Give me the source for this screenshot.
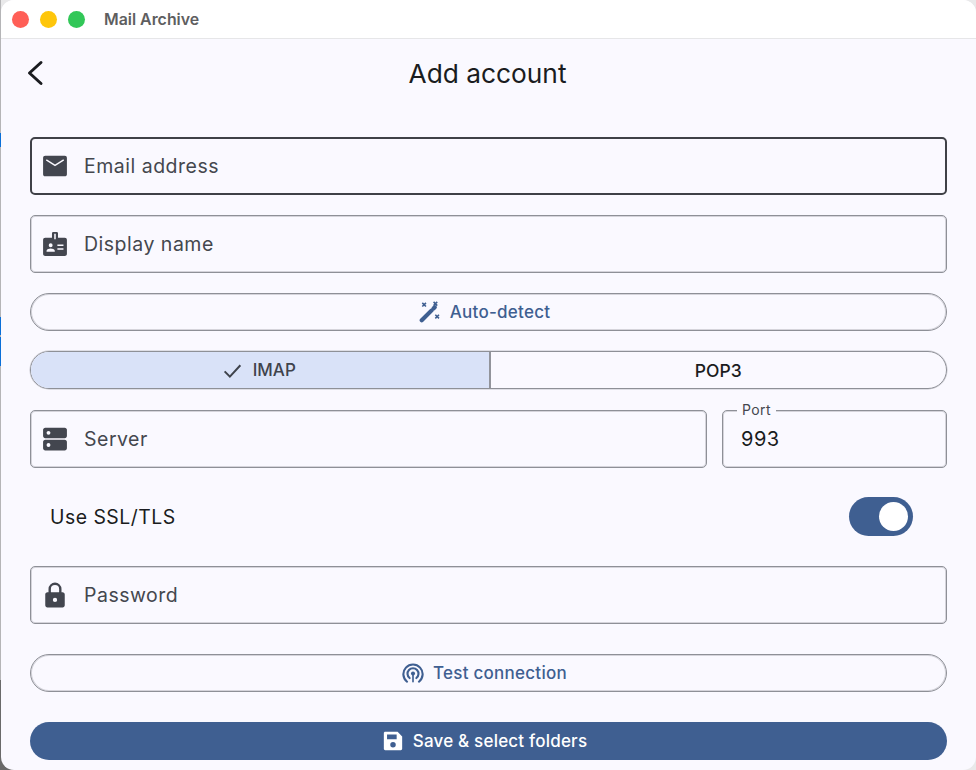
<div class="desktop">
	<!-- slivers of whatever sits behind the window -->
	<span class="sliver strip"></span>
	<span class="sliver blue one"></span>
	<span class="sliver blue two"></span>
	<span class="sliver blue three"></span>
	<span class="sliver dark"></span>

	<div class="window">
		<header class="titlebar">
			<div class="lights">
				<span class="light red"></span>
				<span class="light yellow"></span>
				<span class="light green"></span>
			</div>
			<span class="app-name">Mail Archive</span>
		</header>

		<main class="page">
			<div class="appbar">
				<button type="button" class="back" aria-label="Back">
					<svg width="28" height="28" viewBox="0 0 28 28" fill="none" stroke="#1a1c20" stroke-width="3" stroke-linecap="round" stroke-linejoin="round">
						<path d="M17 3.500 L5.500 14 L17 24.500" />
					</svg>
				</button>
				<h1>Add account</h1>
			</div>

			<div class="form">
				<div class="field focused">
					<svg class="icon" viewBox="0 0 24 24"><path d="M3 2.500h18c1.200 0 2 .8 2 2v15c0 1.200-.8 2-2 2H3c-1.200 0-2-.8-2-2v-15c0-1.200.8-2 2-2zm1.300 3.300-.7 1.200L12 12.200 20.400 7l-.7-1.200L12 10.500 4.300 5.800z" fill-rule="evenodd" /></svg>
					<span class="label">Email address</span>
				</div>

				<div class="field">
					<svg class="icon" viewBox="0 0 24 24"><path d="M10.500 1h3c.8 0 1.300.6 1.300 1.300v3.900H21c1.200 0 2 .8 2 2V21c0 1.200-.8 2-2 2H3c-1.200 0-2-.8-2-2V8.200c0-1.200.8-2 2-2h6.200V2.300c0-.7.5-1.300 1.300-1.300zm.8 1.500v5h1.400v-5h-1.400zM8 11.300a1.800 1.800 0 1 0 0 3.600 1.800 1.800 0 0 0 0-3.600zm-3.800 6.900v1h7.600v-1c0-1.300-2.500-2-3.800-2s-3.800.7-3.800 2zm10-5.700v1.400h5.600v-1.400h-5.600zm0 3.400v1.400h5.600v-1.400h-5.600z" fill-rule="evenodd" /></svg>
					<span class="label">Display name</span>
				</div>

				<button type="button" class="pill">
					<svg class="btn-icon stroked" viewBox="0 0 24 24">
						<path d="M3 21 L13.500 10.500" stroke-width="4.600" stroke-linecap="round" />
						<path d="M15.800 8.200 L17.200 6.800" stroke-width="4.600" stroke-linecap="round" />
						<path d="M3.600 2 L7.600 6 M7.600 2 L3.600 6 M15.900 1 L19.900 5 M19.900 1 L15.900 5 M17.800 15 L21.800 19 M21.800 15 L17.800 19" stroke-width="1.700" />
					</svg>
					Auto-detect
				</button>

				<div class="segments">
					<button type="button" class="segment selected">
						<svg width="21" height="21" viewBox="0 0 24 24" fill="none" stroke="#3f434c" stroke-width="2.300"><path d="M3 13l6 6L21 6" /></svg>
						IMAP
					</button>
					<button type="button" class="segment">POP3</button>
				</div>

				<div class="server-row">
					<div class="field grow">
						<svg class="icon" viewBox="0 0 24 24"><path d="M3 1.500h18c1.100 0 2 .9 2 2v5.700c0 1.100-.9 2-2 2H3c-1.100 0-2-.9-2-2V3.500c0-1.100.9-2 2-2zm3 3a1.800 1.800 0 1 0 0 3.600 1.800 1.800 0 0 0 0-3.600zM3 12.800h18c1.100 0 2 .9 2 2v5.700c0 1.100-.9 2-2 2H3c-1.100 0-2-.9-2-2v-5.700c0-1.100.9-2 2-2zm3 3a1.800 1.800 0 1 0 0 3.600 1.800 1.800 0 0 0 0-3.600z" fill-rule="evenodd" /></svg>
						<span class="label">Server</span>
					</div>
					<div class="field port">
						<span class="float-label">Port</span>
						<span class="value">993</span>
					</div>
				</div>

				<div class="switch-row">
					<span>Use SSL/TLS</span>
					<div class="switch"><span class="knob"></span></div>
				</div>

				<div class="field">
					<svg class="icon" viewBox="0 0 24 24"><path d="M12 .5a6 6 0 0 1 6 6v3h1c1.100 0 2 .9 2 2v10c0 1.100-.9 2-2 2H5c-1.100 0-2-.9-2-2v-10c0-1.100.9-2 2-2h1v-3a6 6 0 0 1 6-6zm0 2.200a3.800 3.800 0 0 0-3.800 3.800v3h7.600v-3A3.800 3.800 0 0 0 12 2.700zm0 11.800a2 2 0 1 0 0 4 2 2 0 0 0 0-4z" fill-rule="evenodd" /></svg>
					<span class="label">Password</span>
				</div>

				<button type="button" class="pill test">
					<svg class="btn-icon stroked" viewBox="0 0 24 24" stroke-width="2.300" stroke-linecap="round">
						<path d="M5.500 21.500a10.500 10.500 0 1 1 13 0" />
						<path d="M8.300 17.500a6 6 0 1 1 7.400 0" />
						<circle class="dot" cx="12" cy="12.500" r="2.200" />
						<path d="M12 14v7.500" stroke-width="1.800" />
					</svg>
					Test connection
				</button>

				<button type="button" class="save">
					<svg class="btn-icon white" viewBox="0 0 24 24"><path d="M3.500 2H17l5 5v13.500c0 .8-.7 1.500-1.500 1.500h-17C2.700 22 2 21.300 2 20.500v-17C2 2.700 2.700 2 3.500 2zM5.500 5v5h10.500V5H5.500zM12 13a3 3 0 1 0 0 6 3 3 0 0 0 0-6z" fill-rule="evenodd" /></svg>
					Save &amp; select folders
				</button>
			</div>
		</main>
	</div>
</div>

<style>
	:global(body) {
		margin: 0;
		background: #fff;
	}

	.desktop {
		position: relative;
		width: 976px;
		height: 770px;
		overflow: hidden;
		background: #e9e9ea;
		font-family: Inter, "Liberation Sans", sans-serif;
	}

	.sliver {
		position: absolute;
		left: 0;
		width: 1px;
	}

	.strip {
		top: 0;
		height: 770px;
		background: #b5b5b7;
	}

	.blue {
		background: #0a6fd8;
	}

	.one { top: 133px; height: 14px; }
	.two { top: 317px; height: 18px; }
	.three { top: 337px; height: 29px; }

	.dark {
		top: 680px;
		height: 90px;
		width: 14px;
		background: #6a6a6a;
	}

	.window {
		position: relative;
		margin-left: 1px;
		width: 975px;
		height: 770px;
		border-radius: 13px;
		overflow: hidden;
		background: #faf9ff;
	}

	.titlebar {
		box-sizing: border-box;
		height: 39px;
		display: flex;
		align-items: center;
		background: #fff;
		border-bottom: 1px solid #e6e6e8;
		padding-left: 11px;
	}

	.lights {
		display: flex;
		gap: 11px;
		width: 92px;
	}

	.light {
		width: 17px;
		height: 17px;
		border-radius: 50%;
	}

	.red { background: #ff5f57; }
	.yellow { background: #fec60b; }
	.green { background: #32c758; }

	.app-name {
		font-size: 15.900px;
		font-weight: 600;
		color: #5e5e60;
	}

	.page {
		padding: 0 29px;
	}

	.appbar {
		position: relative;
		height: 68px;
		display: flex;
		align-items: center;
		justify-content: center;
		margin-bottom: 30px;
	}

	.back {
		position: absolute;
		left: -6px;
		top: 20px;
		padding: 0;
		border: none;
		background: none;
		width: 28px;
		height: 28px;
	}

	h1 {
		margin: 0;
		font-size: 26.300px;
		font-weight: 400;
		color: #1a1c20;
		transform: translateX(-1px);
	}

	.form {
		display: flex;
		flex-direction: column;
		gap: 20px;
	}

	.field {
		box-sizing: border-box;
		position: relative;
		height: 58px;
		display: flex;
		align-items: center;
		gap: 16px;
		padding-left: 11px;
		border: 1px solid #8e9097;
		box-shadow: inset 0 0 0 1px rgb(142 144 151 / 0.35);
		border-radius: 5px;
	}

	.field.focused {
		border: 2px solid #3f4147;
		box-shadow: none;
		padding-left: 10px;
	}

	.icon {
		width: 26px;
		height: 26px;
		fill: #43464f;
		flex: none;
	}

	.label {
		font-size: 19.500px;
		letter-spacing: 0.5px;
		color: #44474e;
	}

	.pill {
		box-sizing: border-box;
		height: 38px;
		display: flex;
		align-items: center;
		justify-content: center;
		gap: 9px;
		padding: 0 8px 0 0;
		border: 1px solid #8e9097;
		box-shadow: inset 0 0 0 1px rgb(142 144 151 / 0.35);
		border-radius: 19px;
		background: transparent;
		font-family: inherit;
		font-size: 17px;
		font-weight: 500;
		letter-spacing: 0.25px;
		color: #3f5f91;
	}

	.pill.test {
		margin-top: 10px;
		margin-bottom: 10px;
	}

	.btn-icon {
		width: 22px;
		height: 22px;
		fill: #3f5f91;
		flex: none;
	}

	.btn-icon.stroked {
		fill: none;
		stroke: #3f5f91;
	}

	.btn-icon .dot {
		fill: #3f5f91;
		stroke: none;
	}

	.btn-icon.white {
		fill: #fff;
	}

	.segments {
		box-sizing: border-box;
		height: 38px;
		display: flex;
		border: 1px solid #8e9097;
		box-shadow: 0 0 0 0.5px rgb(142 144 151 / 0.5);
		border-radius: 19px;
		overflow: hidden;
	}

	.segment {
		flex: 1 1 0;
		display: flex;
		align-items: center;
		justify-content: center;
		gap: 10px;
		padding: 0;
		border: none;
		background: transparent;
		font-family: inherit;
		font-size: 17.500px;
		font-weight: 500;
		color: #1a1c20;
	}

	.segment.selected {
		background: #d9e2f8;
		border-right: 2px solid #92949b;
		padding-right: 2px;
		font-size: 17px;
		color: #3f434c;
	}

	.server-row {
		display: flex;
		gap: 15px;
		margin-top: 1px;
	}

	.grow {
		flex: 1;
	}

	.port {
		flex: none;
		width: 225px;
		padding-left: 18px;
	}

	.float-label {
		position: absolute;
		top: -9px;
		left: 14px;
		padding: 0 5px;
		background: #faf9ff;
		font-size: 14px;
		line-height: 16px;
		letter-spacing: 0.4px;
		color: #44474e;
	}

	.value {
		font-size: 20px;
		letter-spacing: 0.5px;
		color: #1a1c20;
	}

	.switch-row {
		height: 39px;
		margin-top: 9px;
		margin-bottom: 10px;
		display: flex;
		align-items: center;
		justify-content: space-between;
		padding: 0 34px 0 20px;
		font-size: 19.400px;
		letter-spacing: 0.5px;
		color: #1a1c20;
	}

	.switch {
		width: 64px;
		height: 39px;
		border-radius: 20px;
		background: #3f5f91;
		display: flex;
		align-items: center;
		justify-content: flex-end;
		padding-right: 5px;
		box-sizing: border-box;
	}

	.knob {
		width: 29px;
		height: 29px;
		border-radius: 50%;
		background: #fff;
	}

	.save {
		height: 38px;
		display: flex;
		align-items: center;
		justify-content: center;
		gap: 9px;
		padding: 0 8px 0 0;
		border: none;
		border-radius: 19px;
		background: #3f5f91;
		font-family: inherit;
		font-size: 17px;
		font-weight: 500;
		letter-spacing: 0.2px;
		color: #fff;
	}
</style>
